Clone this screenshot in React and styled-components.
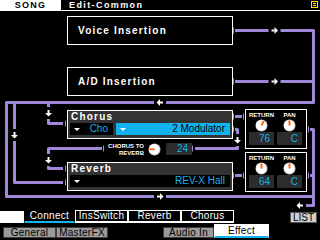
import React from "react";
import styled, { createGlobalStyle } from "styled-components";

const PURPLE = "#9f88d8";
const CYAN = "#12b2ee";
const ORANGE = "#ff6a10";

const GlobalStyle = createGlobalStyle`
  html, body { margin: 0; padding: 0; background: #000; }
  body { font-family: "Liberation Sans", Arial, sans-serif; }
`;

const Screen = styled.div`
  position: relative;
  width: 320px;
  height: 240px;
  background: #000;
  overflow: hidden;
  display: flex;
  flex-direction: column;
`;

// ---- header
const Header = styled.div`
  display: flex;
  height: 11px;
`;
const SongTag = styled.div`
  width: 61px;
  background: #fff;
  color: #000;
  font-weight: bold;
  font-size: 9px;
  letter-spacing: 1.2px;
  line-height: 11px;
  text-align: center;
`;
const Title = styled.div`
  flex: 1;
  display: flex;
  justify-content: space-between;
  border-bottom: 1px solid #fff;
  color: #fff;
  font-weight: bold;
  font-size: 9px;
  letter-spacing: 1.4px;
  line-height: 10px;
  padding-left: 8px;
`;
const MenuIcon = styled.svg`
  margin: 1px 2px 0 0;
`;

// ---- main diagram area
const Main = styled.div`
  flex: 1;
  display: flex;
  flex-direction: column;
  padding: 5px 0 0 67px;
`;
const InsBox = styled.div`
  width: 166px;
  height: 29px;
  box-sizing: border-box;
  border: 1px solid #fff;
  margin-top: ${(p) => p.$top || 0}px;
  display: flex;
  align-items: center;
  padding-left: 10px;
  color: #fff;
  font-weight: bold;
  font-size: 10px;
  letter-spacing: 1.2px;
`;
const EffectSection = styled.div`
  display: flex;
  margin-top: 13px;
`;
const LeftCol = styled.div`
  width: 166px;
  display: flex;
  flex-direction: column;
`;
const RightCol = styled.div`
  width: 62px;
  margin-left: 12px;
  display: flex;
  flex-direction: column;
`;
const FxBox = styled.div`
  width: 166px;
  height: 29px;
  box-sizing: border-box;
  border: 1px solid #fff;
  background: #333;
  margin-top: ${(p) => p.$top}px;
  padding: 0 2px;
  display: flex;
  flex-direction: column;
`;
const FxName = styled.div`
  height: 12px;
  line-height: 12px;
  padding-left: 1px;
  color: #fff;
  font-weight: bold;
  font-size: 10px;
  letter-spacing: 1.2px;
`;
const FxRow = styled.div`
  height: 12px;
  display: flex;
  gap: 3px;
`;
const Cell = styled.div`
  width: ${(p) => (p.$w ? `${p.$w}px` : "auto")};
  flex: ${(p) => (p.$w ? "none" : 1)};
  background: ${(p) => (p.$active ? CYAN : "#000")};
  color: ${(p) => (p.$active ? "#000" : CYAN)};
  display: flex;
  align-items: center;
  justify-content: space-between;
  padding: 0 5px 0 4px;
  font-size: 10px;
  line-height: 12px;
`;
const Caret = styled.span`
  width: 0;
  height: 0;
  border-left: 3px solid transparent;
  border-right: 3px solid transparent;
  border-top: 3px solid #fff;
  margin-top: 1px;
`;

const SendRow = styled.div`
  height: 12px;
  margin-top: 4px;
  padding-left: 41px;
  display: flex;
  align-items: center;
`;
const SendLabel = styled.div`
  width: 36px;
  text-align: right;
  color: #fff;
  font-weight: bold;
  font-size: 6px;
  line-height: 6.5px;
  margin-top: 1px;
`;
const ValueBox = styled.div`
  width: ${(p) => p.$w || 25}px;
  height: ${(p) => p.$h || 13}px;
  background: #2c2c2c;
  color: ${CYAN};
  font-size: 10px;
  line-height: ${(p) => p.$h || 13}px;
  text-align: right;
  padding-right: 4px;
  box-sizing: border-box;
`;

const Panel = styled.div`
  height: 40px;
  box-sizing: border-box;
  border: 1px solid #fff;
  margin-top: ${(p) => p.$top}px;
  padding: 2px 3px 0;
  display: grid;
  grid-template-columns: 25px 25px;
  column-gap: 3px;
  grid-template-rows: 7px 13px 13px;
  justify-items: center;
`;
const PanelLabel = styled.div`
  color: #fff;
  font-weight: bold;
  font-size: 6px;
  line-height: 7px;
`;

// ---- footer tabs
const Footer = styled.div`
  height: 30px;
  display: flex;
  flex-direction: column;
`;
const TabRow = styled.div`
  height: 13px;
  display: flex;
  align-items: stretch;
`;
const WhiteLead = styled.div`
  width: 24px;
  background: #fff;
  margin-top: 1px;
`;
const Tab = styled.div`
  width: ${(p) => p.$w}px;
  box-sizing: border-box;
  border: 1px solid ${(p) => (p.$active ? "#000" : "#fff")};
  border-bottom: 2px solid ${(p) => (p.$active ? CYAN : "#fff")};
  background: #000;
  color: #fff;
  font-size: 10px;
  line-height: 10px;
  text-align: center;
  letter-spacing: 0.3px;
`;
const ListButton = styled.div`
  margin: 2px 3px 0 auto;
  width: 27px;
  height: 11px;
  box-sizing: border-box;
  background: #cfcfcf;
  border: 1px solid #555;
  color: #000;
  font-size: 10px;
  line-height: 9px;
  text-align: center;
`;
const PageRow = styled.div`
  flex: 1;
  display: flex;
  align-items: flex-end;
  padding: 0 0 2px 3px;
`;
const PageTab = styled.div`
  width: ${(p) => p.$w}px;
  margin-left: ${(p) => p.$gap || 0}px;
  height: ${(p) => (p.$active ? 14 : 11)}px;
  box-sizing: border-box;
  background: ${(p) => (p.$active ? "#fff" : "#9a9a9a")};
  border: 1px solid ${(p) => (p.$active ? "#fff" : "#3c3c3c")};
  border-bottom: ${(p) => (p.$active ? `2px solid ${CYAN}` : "1px solid #3c3c3c")};
  color: #000;
  font-size: 10px;
  line-height: ${(p) => (p.$active ? 11 : 9)}px;
  text-align: center;
  letter-spacing: 0.3px;
`;

const WireLayer = styled.svg`
  position: absolute;
  left: 0;
  top: 0;
  pointer-events: none;
`;

const Knob = ({ value, max = 127, pan }) => {
  const angle = pan ? 0 : -135 + (270 * value) / max;
  const rad = (angle * Math.PI) / 180;
  const x2 = 6.5 + Math.sin(rad) * 5;
  const y2 = 6.5 - Math.cos(rad) * 5;
  return (
    <svg width="13" height="13" viewBox="0 0 13 13">
      <circle cx="6.5" cy="6.5" r="6" fill="#cfcfcf" />
      <circle cx="6.2" cy="6.2" r="5.2" fill="#fff" />
      <line x1="6.5" y1="6.5" x2={x2} y2={y2} stroke={ORANGE} strokeWidth="2" />
    </svg>
  );
};

const Arrow = ({ x, y, dir }) => {
  const rot = { right: 0, down: 90, left: 180, up: 270 }[dir];
  return (
    <g transform={`translate(${x} ${y}) rotate(${rot})`}>
      <rect x="-6" y="-3" width="12" height="6" fill="#000" />
      <rect x="-3" y="-1" width="3" height="2" fill="#fff" />
      <polygon points="0,-3.5 3.5,0 0,3.5" fill="#fff" />
    </g>
  );
};

const ticks = [
  [233.5, 30.5], [233.5, 81.5], [233.5, 116.5], [233.5, 129.5], [233.5, 175.5],
  [243.5, 116.5], [243.5, 175.5], [308.5, 129.5], [308.5, 175.5],
  [65.5, 123.5], [65.5, 168.5], [65.5, 182.5], [103.5, 148.5], [192.5, 148.5],
];

const wires = [
  "M235 30.5 H313.5 V102.5 H6.5 V196.5 H313.5",
  "M235 81.5 H313.5",
  "M310 129.5 H313.5 V205.5 H302",
  "M310 175.5 H313.5",
  "M48.5 102.5 V123.5 H63",
  "M14.5 102.5 V182.5 H63",
  "M102 148.5 H48.5 V168.5 H63",
  "M235 129.5 H237.5 V148.5 H195",
  "M235 116.5 H242",
  "M235 175.5 H242",
];

const arrows = [
  [274.5, 30.5, "right"], [274.5, 81.5, "right"], [160, 102.5, "left"],
  [160, 196.5, "right"], [48.5, 113, "down"], [14.5, 135, "down"],
  [48.5, 160, "down"], [237.5, 140, "down"], [300, 205.5, "left"],
];

const Wires = () => (
  <WireLayer width="320" height="240">
    {wires.map((d, i) => (
      <path key={i} d={d} fill="none" stroke={PURPLE} strokeWidth="3" strokeLinejoin="round" />
    ))}
    {ticks.map(([x, y], i) => (
      <line key={i} x1={x} y1={y - 3} x2={x} y2={y + 3} stroke={PURPLE} strokeWidth="1" />
    ))}
    {arrows.map(([x, y, d], i) => (
      <Arrow key={i} x={x} y={y} dir={d} />
    ))}
  </WireLayer>
);

const ReturnPanel = ({ top, ret, pan }) => (
  <Panel $top={top}>
    <PanelLabel>RETURN</PanelLabel>
    <PanelLabel>PAN</PanelLabel>
    <Knob value={ret} />
    <Knob pan />
    <ValueBox>{ret}</ValueBox>
    <ValueBox>{pan}</ValueBox>
  </Panel>
);

export default function App() {
  return (
    <Screen>
      <GlobalStyle />
      <Header>
        <SongTag>SONG</SongTag>
        <Title>
          <span>Edit-Common</span>
          <MenuIcon width="7" height="7" viewBox="0 0 7 7">
            <rect x="0.5" y="0.5" width="6" height="6" fill="none" stroke="#ffe600" />
            <line x1="2" y1="2.5" x2="5" y2="2.5" stroke="#ffe600" />
            <line x1="2" y1="4.5" x2="5" y2="4.5" stroke="#ffe600" />
          </MenuIcon>
        </Title>
      </Header>

      <Main>
        <InsBox>Voice Insertion</InsBox>
        <InsBox $top={22}>A/D Insertion</InsBox>
        <EffectSection>
          <LeftCol>
            <FxBox $top={1}>
              <FxName>Chorus</FxName>
              <FxRow>
                <Cell $w={34}>
                  <Caret />
                  <span>Cho</span>
                </Cell>
                <Cell $active>
                  <Caret />
                  <span>2 Modulator</span>
                </Cell>
              </FxRow>
            </FxBox>
            <SendRow>
              <SendLabel>
                CHORUS TO
                <br />
                REVERB
              </SendLabel>
              <div style={{ width: 4 }} />
              <Knob value={24} />
              <div style={{ width: 5 }} />
              <ValueBox $w={26} $h={12}>24</ValueBox>
            </SendRow>
            <FxBox $top={7}>
              <FxName>Reverb</FxName>
              <FxRow>
                <Cell>
                  <Caret />
                  <span>REV-X Hall</span>
                </Cell>
              </FxRow>
            </FxBox>
          </LeftCol>
          <RightCol>
            <ReturnPanel top={0} ret={76} pan="C" />
            <ReturnPanel top={3} ret={64} pan="C" />
          </RightCol>
        </EffectSection>
      </Main>

      <Footer>
        <TabRow>
          <WhiteLead />
          <Tab $w={51} $active>Connect</Tab>
          <Tab $w={53}>InsSwitch</Tab>
          <Tab $w={53}>Reverb</Tab>
          <Tab $w={53}>Chorus</Tab>
          <ListButton>LIST</ListButton>
        </TabRow>
        <PageRow>
          <PageTab $w={53}>General</PageTab>
          <PageTab $w={52}>MasterFX</PageTab>
          <PageTab $w={51} $gap={55}>Audio In</PageTab>
          <PageTab $w={55} $active>Effect</PageTab>
        </PageRow>
      </Footer>
      <Wires />
    </Screen>
  );
}
